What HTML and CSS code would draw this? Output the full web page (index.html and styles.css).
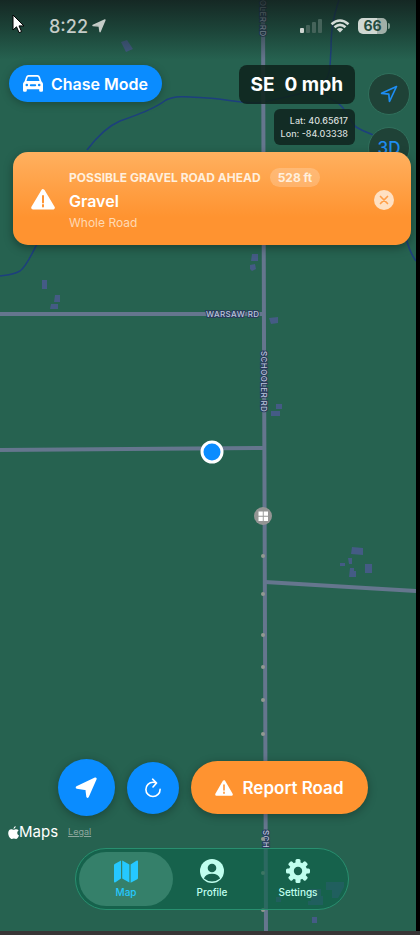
FILE: index.html
```html
<!DOCTYPE html>
<html lang="en">
<head>
    <meta charset="UTF-8">
    <meta name="viewport" content="width=device-width, initial-scale=1.0">
    <title>Chase Mode - Map</title>
    <link rel="stylesheet" href="styles.css">
</head>
<body>
    <div class="screen">
        <!-- Map -->
        <svg class="map" viewBox="0 0 416 931" preserveAspectRatio="xMidYMid slice" role="img" aria-label="Map">
            <g class="river">
                <path d="M87 150 C96 138 106 127 120 121 C137 115 154 109 166 100 C176 95 190 97 207 98 C225 99 240 103 258 103 C282 99 305 92 322 88"/>
                <path d="M339 0 C333 18 331 30 331 50 C330 60 331 72 327 78 C317 88 321 94 333 100 C346 106 347 118 356 127 C363 131 369 133 375 136"/>
                <path d="M37 244 C32 253 27 266 20 271 C13 275 7 275 0 276"/>
                <path d="M406 238 C409 249 412 256 416 261"/>
            </g>
            <g class="building">
                <path d="M121 42l6-2 6 9-7 3z"/>
                <path d="M42 280h5v9h-5zM55 295h5v7h-6zM51 304h7v5h-8z"/>
                <path d="M252 254h6v7h-7zM250 265l5-1 1 5-4 2-2-2zM269 318l9-1v6l-7 1z"/>
                <path d="M276 404h6v5h-6zM271 411h9v5h-9z"/>
                <path d="M352 547l11 1v7l-12-1zM365 564h7v9h-7zM348 558h4v6h-3zM340 563h5v3h-5zM350 568h4v3h2v6h-7z"/>
                <path d="M326 882h18v5l-6 11h-6v-8h-6zM309 889h12v7h2v9h-15v-4h3zM312 917h5v6h-5zM276 897h5v5h-5z"/>
            </g>
            <g class="road">
                <path d="M0 314H263"/>
                <path d="M0 450L264 448"/>
                <path d="M265 582L416 591"/>
                <path d="M263 0L264 340L266 931"/>
            </g>
            <g class="road-label">
                <text x="206" y="317">WARSAW RD</text>
                <text transform="translate(261 351) rotate(90)">SCHOOLER RD</text>
                <text transform="translate(260 0) rotate(90)">OLER RD</text>
                <text transform="translate(263 830) rotate(90)">SCH</text>
            </g>
            <g class="stop">
                <circle cx="263" cy="556" r="2"/>
                <circle cx="263" cy="594" r="2"/>
                <circle cx="263" cy="635" r="2"/>
                <circle cx="263" cy="667" r="2"/>
                <circle cx="263" cy="700" r="2"/>
                <circle cx="263" cy="734" r="2"/>
                <circle cx="263" cy="839" r="2"/>
                <circle cx="263" cy="873" r="2"/>
                <circle cx="263" cy="910" r="2"/>
            </g>
            <circle cx="263" cy="516" r="9" fill="#949594"/>
            <path d="M258.500 511.500h4.300v4.300h-4.300zM263.700 511.500h4.300v4.300h-4.300zM258.500 516.700h4.300v4.300h-4.300zM263.700 516.700h4.300v4.300h-4.300z" fill="#fff"/>
            <circle cx="212" cy="452" r="10" fill="#0a8cff" stroke="#fff" stroke-width="3"/>
        </svg>
        <div class="top-shade"></div>

        <header class="status-bar">
            <div class="clock">
                <span>8:22</span>
                <svg width="14" height="14" viewBox="0 0 14 14"><path d="M13 1L8 12.700 7.200 7.100 1 6.500z" fill="currentColor" stroke="currentColor" stroke-width="1.400" stroke-linejoin="round"/></svg>
            </div>
            <div class="indicators">
                <svg width="22" height="14" viewBox="0 0 22 14">
                    <rect x="0" y="9" width="4" height="5" rx="1" fill="#ced5d1"/>
                    <g fill="#45635a"><rect x="6" y="6" width="4" height="8" rx="1"/><rect x="12" y="3" width="4" height="11" rx="1"/><rect x="18" y="0" width="4" height="14" rx="1"/></g>
                </svg>
                <svg width="20" height="14" viewBox="0 0 20 14">
                    <path d="M1.500 5.200Q10-2.200 18.500 5.200M4.500 8.300Q10 3.400 15.500 8.300" fill="none" stroke="#d3dbd7" stroke-width="2.600"/>
                    <path d="M10 13.500L6.800 10.300Q10 7.700 13.200 10.300z" fill="#d3dbd7"/>
                </svg>
                <div class="battery">66</div>
            </div>
        </header>

        <div class="toolbar">
            <button class="chase" type="button">
                <svg width="20" height="17" viewBox="0 0 20 17">
                    <path d="M5.500 0h9q1.800 0 2.400 1.700l1.500 4.500 1.200 1.600q.4.600.4 1.400v6.300q0 1.300-1.300 1.300h-1.200q-1.300 0-1.300-1.300v-1.300H3.800v1.300Q3.800 16.800 2.500 16.800H1.300Q0 16.800 0 15.500V9.200q0-.8.4-1.400l1.200-1.600 1.500-4.500Q3.700 0 5.500 0z" fill="#fff"/>
                    <path d="M5.600 1.700h8.800q.7 0 1 .7l1.100 3.700h-13l1.100-3.700q.3-.7 1-.7z" fill="#0a8cff"/>
                    <circle cx="3.800" cy="10" r="1.300" fill="#0a8cff"/><circle cx="16.200" cy="10" r="1.300" fill="#0a8cff"/>
                    <rect x="6.800" y="9.200" width="6.400" height="2" rx="1" fill="#0a8cff"/>
                </svg>
                Chase Mode
            </button>
            <div class="readout">
                <div class="speed"><span>SE</span><span>0 mph</span></div>
                <div class="coords">Lat: 40.65617<br>Lon: -84.03338</div>
            </div>
            <div class="map-controls">
                <button type="button" aria-label="Follow location">
                    <svg width="18" height="18" viewBox="0 0 18 18"><path d="M16.500 1.500L1.600 8.300l7.200.9.700 7.300z" fill="none" stroke="currentColor" stroke-width="1.700" stroke-linejoin="round"/></svg>
                </button>
                <button type="button">3D</button>
            </div>
        </div>

        <section class="alert">
            <svg class="alert-icon" width="24" height="21" viewBox="0 0 24 21"><path d="M12 2L22 18.700H2z" fill="#fff" stroke="#fff" stroke-width="3.600" stroke-linejoin="round"/><path d="M12 7v6.500M12 16v1.400" stroke="#ff9433" stroke-width="2" stroke-linecap="round"/></svg>
            <div class="alert-body">
                <div class="alert-head">
                    <span>POSSIBLE GRAVEL ROAD AHEAD</span>
                    <span class="distance">528 ft</span>
                </div>
                <h1>Gravel</h1>
                <p>Whole Road</p>
            </div>
            <button class="close" type="button" aria-label="Dismiss">
                <svg width="10" height="10" viewBox="0 0 10 10"><path d="M1.500 1.500l7 7M8.500 1.500l-7 7" stroke="#ff9f4a" stroke-width="1.700" stroke-linecap="round"/></svg>
            </button>
        </section>

        <div class="actions">
            <button class="locate" type="button" aria-label="My location">
                <svg width="22" height="22" viewBox="0 0 22 22"><path d="M20.400 1.800L12.600 19.600 11.600 11.900 2 10.400z" fill="#fff" stroke="#fff" stroke-width="2.600" stroke-linejoin="round"/></svg>
            </button>
            <button class="refresh" type="button" aria-label="Refresh">
                <svg width="18" height="20" viewBox="0 0 18 20"><path d="M12.500 5Q11 4.300 9 4.300A7.100 7.100 0 1 0 16.100 11.400M8.600 1.200L12.600 5 9 9" fill="none" stroke="#fff" stroke-width="1.600" stroke-linecap="round" stroke-linejoin="round"/></svg>
            </button>
            <button class="report" type="button">
                <svg width="18" height="16" viewBox="0 0 18 16"><path d="M9 1.500L16.500 14.500h-15z" fill="#fff" stroke="#fff" stroke-width="2.600" stroke-linejoin="round"/><path d="M9 5v5M9 12.300v1" stroke="#ff9433" stroke-width="1.600" stroke-linecap="round"/></svg>
                Report Road
            </button>
        </div>

        <div class="attribution">
            <span class="maps-logo">
                <svg width="11" height="13" viewBox="0 0 11 13"><path d="M7.700.1Q7.800 2.500 5.500 3 5.400.8 7.700.1zM5.600 3.800C6.500 3.800 7 3.200 8.100 3.200q1.600 0 2.500 1.300Q9.100 5.400 9.200 7.100 9.300 8.900 11 9.600 10.300 11.600 9.100 12.600C8.100 13.300 7 12.500 5.900 12.500S4 13.300 3 12.700C1.300 11.600.1 8.900.2 6.900.3 4.700 1.500 3.300 3.200 3.200 4.200 3.200 5 3.800 5.600 3.800z" fill="#fff"/></svg>Maps</span>
            <a href="#">Legal</a>
        </div>

        <nav class="tab-bar">
            <a class="tab active" href="#">
                <svg width="24" height="23" viewBox="0 0 24 23" fill="currentColor"><path d="M7 .6v18L1.500 22.300Q0 23 0 21.500V5.200Q0 4.500.7 4zM8.200.6l7.200 3.800v18.200l-7.200-4zM16.600 4.400l5.800-3.600Q24 0 24 1.500V18q0 .7-.7 1.200l-6.700 3.500z"/></svg>
                Map
            </a>
            <a class="tab" href="#">
                <svg width="24" height="24" viewBox="0 0 24 24"><circle cx="12" cy="12" r="12" fill="currentColor"/><circle cx="12" cy="9" r="4.300" fill="#17624e"/><path d="M3.900 19.600Q5.500 14.800 12 14.800t8.100 4.800Q16.700 22.500 12 22.500t-8.100-2.900z" fill="#17624e"/></svg>
                Profile
            </a>
            <a class="tab" href="#">
                <svg width="24" height="24" viewBox="0 0 24 24">
                    <g fill="currentColor"><circle cx="12" cy="12" r="9"/>
                    <rect id="tooth" x="9.500" y="0" width="5" height="24" rx="1.500"/>
                    <use href="#tooth" transform="rotate(45 12 12)"/><use href="#tooth" transform="rotate(90 12 12)"/><use href="#tooth" transform="rotate(135 12 12)"/></g>
                    <circle cx="12" cy="12" r="4.200" fill="#17624e"/>
                </svg>
                Settings
            </a>
        </nav>
        <svg class="cursor" width="13" height="20" viewBox="0 0 13 20"><path d="M1 1v15l3.500-3.200 2.600 5.900 2.500-1.100L7 11.900h4.900z" fill="#fff" stroke="#000" stroke-width="1"/></svg>
    </div>
</body>
</html>
```
FILE: styles.css
```css
* {
    box-sizing: border-box;
}
body {
    margin: 0;
    padding: 0 4px 4px 0;
    background: linear-gradient(to top, #383536 4px, #000 4px);
    font-family: Inter, "Liberation Sans", sans-serif;
    color: #fff;
}
button {
    border: none;
    padding: 0;
    font-family: inherit;
    color: inherit;
    display: flex;
    align-items: center;
    justify-content: center;
    cursor: pointer;
}
.screen {
    position: relative;
    display: flex;
    flex-direction: column;
    min-height: calc(100vh - 4px);
    background: #266250;
    overflow: hidden;
}

/* Map */
.map {
    position: absolute;
    inset: 0;
    width: 100%;
    height: 100%;
}
.river {
    fill: none;
    stroke: #1d3f7e;
    stroke-width: 1.5;
}
.building {
    fill: #445b85;
}
.road {
    fill: none;
    stroke: #65768e;
    stroke-width: 4;
}
.road-label {
    font-size: 8px;
    font-weight: 500;
    letter-spacing: 0.05em;
    fill: #bcc5dc;
    stroke: #293b5b;
    stroke-width: 2;
    paint-order: stroke;
}
.stop {
    fill: #929991;
}
.top-shade {
    position: absolute;
    inset: 0 0 auto;
    height: 60px;
    background: linear-gradient(rgba(18, 30, 28, 0.85), rgba(18, 38, 33, 0.5) 50%, rgba(18, 38, 33, 0));
}

/* Status bar */
.status-bar {
    position: relative;
    display: flex;
    justify-content: space-between;
    align-items: center;
    padding: 14px 29px 0 49px;
    height: 38px;
    color: #c5ccc8;
}
.clock {
    display: flex;
    align-items: center;
    gap: 4px;
    font-size: 18px;
    font-weight: 500;
}
.indicators {
    display: flex;
    align-items: center;
    gap: 8px;
}
.battery {
    position: relative;
    width: 29px;
    border-radius: 5px;
    background: linear-gradient(to right, #d0d8d3 66%, #a1afa8 66%);
    color: #254b3f;
    font-size: 14px;
    font-weight: 700;
    line-height: 16px;
    text-align: center;
}
.battery::after {
    content: "";
    position: absolute;
    right: -3px;
    top: 5px;
    width: 2px;
    height: 6px;
    border-radius: 0 2px 2px 0;
    background: #819c91;
}

/* Toolbar */
.toolbar {
    position: relative;
    display: flex;
    align-items: flex-start;
    padding: 27px 6px 0 9px;
}
.chase {
    gap: 8px;
    height: 37px;
    padding: 0 14px;
    border-radius: 20px;
    background: #0a8cff;
    box-shadow: 0 2px 8px rgba(0, 0, 0, 0.25);
    font-size: 16px;
    font-weight: 600;
}
.readout {
    display: flex;
    flex-direction: column;
    align-items: flex-end;
    gap: 5px;
    margin-left: auto;
}
.speed {
    display: flex;
    gap: 10px;
    padding: 0 12px;
    border-radius: 8px;
    background: rgba(15, 35, 29, 0.88);
    font-size: 19px;
    font-weight: 700;
    line-height: 39px;
}
.coords {
    padding: 5px 7px;
    border-radius: 6px;
    background: rgba(15, 35, 29, 0.85);
    color: #d8dfdc;
    font-size: 9px;
    font-weight: 500;
    line-height: 13px;
    text-align: right;
}
.map-controls {
    display: flex;
    flex-direction: column;
    gap: 12px;
    margin: 8px 0 0 13px;
}
.map-controls button {
    width: 42px;
    height: 42px;
    border: 1px solid #30705c;
    border-radius: 50%;
    background: #1f4237;
    color: #1e8df2;
    font-size: 17px;
    font-weight: 500;
}

/* Road alert, drawn over the map controls */
.alert {
    position: absolute;
    top: 152px;
    left: 13px;
    right: 5px;
    display: flex;
    align-items: center;
    padding: 16px 17px 14px 18px;
    border-radius: 15px;
    background: linear-gradient(#ffb05f, #ff9330 70%);
    box-shadow: 0 3px 10px rgba(0, 0, 0, 0.35);
}
.alert-body {
    flex: 1;
    margin-left: 14px;
}
.alert-head {
    display: flex;
    align-items: center;
    gap: 9px;
    color: #ffefdd;
    font-size: 12px;
    font-weight: 700;
    white-space: nowrap;
}
.distance {
    padding: 0 8px;
    border-radius: 10px;
    background: rgba(255, 255, 255, 0.2);
    line-height: 19px;
}
.alert h1 {
    margin: 4px 0;
    font-size: 16px;
    font-weight: 600;
    line-height: 20px;
}
.alert p {
    margin: 0;
    color: #ffd9b3;
    font-size: 12px;
    line-height: 16px;
}
.close {
    width: 20px;
    height: 20px;
    border-radius: 50%;
    background: #ffe0c2;
}

/* Bottom controls */
.actions {
    position: relative;
    display: flex;
    justify-content: center;
    align-items: center;
    gap: 12px;
    margin-top: auto;
    padding-left: 9px;
}
.actions button {
    box-shadow: 0 2px 10px rgba(0, 0, 0, 0.3);
}
.locate {
    width: 57px;
    height: 57px;
    border-radius: 50%;
    background: #0a8cff;
}
.refresh {
    width: 52px;
    height: 52px;
    border-radius: 50%;
    background: #0a8cff;
}
.report {
    gap: 10px;
    height: 53px;
    padding: 0 24px;
    border-radius: 27px;
    background: #ff9330;
    font-size: 17px;
    font-weight: 600;
}
.attribution {
    position: relative;
    display: flex;
    align-items: center;
    gap: 10px;
    padding: 6px 8px;
    line-height: 20px;
}
.maps-logo {
    display: flex;
    align-items: center;
    font-size: 15px;
}
.attribution a {
    color: #8da79e;
    font-size: 9px;
}
.tab-bar {
    position: relative;
    display: flex;
    align-self: center;
    margin: 0 0 21px 8px;
    padding: 3px;
    border: 1px solid #288f6f;
    border-radius: 32px;
    background: rgba(14, 98, 74, 0.65);
}
.tab {
    display: flex;
    flex-direction: column;
    align-items: center;
    justify-content: center;
    gap: 2px;
    width: 94px;
    height: 54px;
    border-radius: 27px;
    color: #c0ffef;
    font-size: 10px;
    font-weight: 500;
    line-height: 14px;
    text-decoration: none;
}
.tab + .tab {
    margin-left: -8px;
}
.tab.active {
    background: #35806a;
    color: #25c8ff;
}
.cursor {
    position: absolute;
    left: 12px;
    top: 14px;
}
```
